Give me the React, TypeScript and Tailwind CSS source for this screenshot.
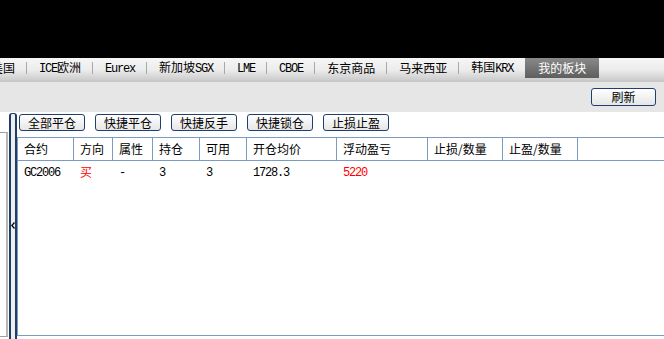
const cjk = { fontFamily: '"Noto Sans CJK SC", "Liberation Sans", sans-serif' };
const mono = { fontFamily: '"Liberation Mono", "Noto Sans CJK SC", monospace' };

function Latin({ children }: { children: string }) {
  return (
    <span className="tracking-[-1.2px]" style={mono}>
      {children}
    </span>
  );
}

const tabs: { zh?: string; en?: string }[] = [
  { zh: "美国" },
  { en: "ICE", zh: "欧洲" },
  { en: "Eurex" },
  { zh: "新加坡", en: "SGX" },
  { en: "LME" },
  { en: "CBOE" },
  { zh: "东京商品" },
  { zh: "马来西亚" },
];

const columns = [
  { name: "合约", w: "w-[56px]" },
  { name: "方向", w: "w-[39px]" },
  { name: "属性", w: "w-[40px]" },
  { name: "持仓", w: "w-[47px]" },
  { name: "可用", w: "w-[47px]" },
  { name: "开仓均价", w: "w-[90px]" },
  { name: "浮动盈亏", w: "w-[91px]" },
  { name: "止损/数量", w: "w-[75px]" },
  { name: "止盈/数量", w: "w-[75px]" },
];

function Btn({ label, w = "w-[66px]", h = "h-[17px]" }: { label: string; w?: string; h?: string }) {
  return (
    <div
      className={`${w} ${h} shrink-0 flex items-center justify-center rounded-[3px] border border-[#1e4070] bg-gradient-to-b from-white to-[#e6e6e6] text-[12px] leading-none text-black`}
      style={cjk}
    >
      {label}
    </div>
  );
}

export default function App() {
  return (
    <div className="w-[664px] h-[339px] overflow-hidden bg-white flex flex-col text-[12px] text-black" style={cjk}>
      <div className="h-[58px] bg-black shrink-0" />

      {/* market tabs */}
      <div className="h-[24px] shrink-0 flex items-start bg-gradient-to-b from-[#f6f6f6] via-[#ececec] to-[#c6c6c6] overflow-hidden">
        <div className="flex items-center gap-[12px] ml-[-9px] h-[20px] whitespace-nowrap">
          {tabs.map((t, i) => (
            <div key={i} className="flex items-center gap-[11px]">
              <span className="leading-none">
                {t.en && t.zh && i === 1 ? (
                  <>
                    <Latin>{t.en}</Latin>
                    {t.zh}
                  </>
                ) : t.zh && t.en ? (
                  <>
                    {t.zh}
                    <Latin>{t.en}</Latin>
                  </>
                ) : t.en ? (
                  <Latin>{t.en}</Latin>
                ) : (
                  t.zh
                )}
              </span>
              <span className="w-px h-[12px] bg-[#a8a8a8]" />
            </div>
          ))}
          <span className="leading-none">
            韩国<Latin>KRX</Latin>
          </span>
          <div className="h-[20px] px-[13px] flex items-center bg-gradient-to-b from-[#8a8a8a] to-[#5e5e5e] text-white leading-none">
            我的板块
          </div>
        </div>
      </div>

      {/* toolbar */}
      <div className="h-[30px] shrink-0 bg-[#e6e6e6] flex items-center justify-end pr-[8px]">
        <Btn label="刷新" w="w-[65px]" h="h-[18px]" />
      </div>

      {/* main */}
      <div className="flex-1 flex min-h-0">
        <div className="w-[8px] shrink-0 flex flex-col">
          <div className="h-[20px] leading-[20px] text-[#333] -ml-[4px]">:</div>
          <div className="flex-1 mb-[2px] border-t border-r-2 border-b border-[#a0a0a0] border-r-[#b8b8b8]" />
        </div>
        <div className="w-[8px] shrink-0 ml-[1px] mt-[1px] rounded-t-[3px] border-x-2 border-t border-[#1d3e6a] bg-[#efefe8] flex items-center justify-center">
          <svg width="4" height="7" viewBox="0 0 4 7" className="-mt-[2px]">
            <path d="M3.5 0.5 L0.8 3.5 L3.5 6.5" fill="none" stroke="#000" strokeWidth="1.3" />
          </svg>
        </div>
        <div className="flex-1 min-w-0 flex flex-col pt-[2px] pb-[3px]">
          <div className="flex gap-[10px] pl-[2px]">
            <Btn label="全部平仓" />
            <Btn label="快捷平仓" />
            <Btn label="快捷反手" />
            <Btn label="快捷锁仓" />
            <Btn label="止损止盈" />
          </div>
          <div className="mt-[6px] flex-1 border-l border-t border-b border-[#7a9cc0] flex flex-col">
            <div className="h-[23px] flex border-b border-[#7a9cc0]">
              {columns.map((c) => (
                <div key={c.name} className={`${c.w} shrink-0 border-r border-[#7a9cc0] pl-[6px] flex items-center leading-none`}>
                  {c.name}
                </div>
              ))}
            </div>
            <div className="h-[22px] flex items-center">
              <div className="w-[56px] pl-[6px] leading-none">
                <Latin>GC2006</Latin>
              </div>
              <div className="w-[39px] pl-[6px] text-[#ff0000] leading-none">买</div>
              <div className="w-[40px] pl-[6px] leading-none">
                <Latin>-</Latin>
              </div>
              <div className="w-[47px] pl-[6px] leading-none">
                <Latin>3</Latin>
              </div>
              <div className="w-[47px] pl-[6px] leading-none">
                <Latin>3</Latin>
              </div>
              <div className="w-[90px] pl-[6px] leading-none">
                <Latin>1728.3</Latin>
              </div>
              <div className="w-[91px] pl-[6px] text-[#ff0000] leading-none">
                <Latin>5220</Latin>
              </div>
            </div>
          </div>
        </div>
      </div>
    </div>
  );
}
